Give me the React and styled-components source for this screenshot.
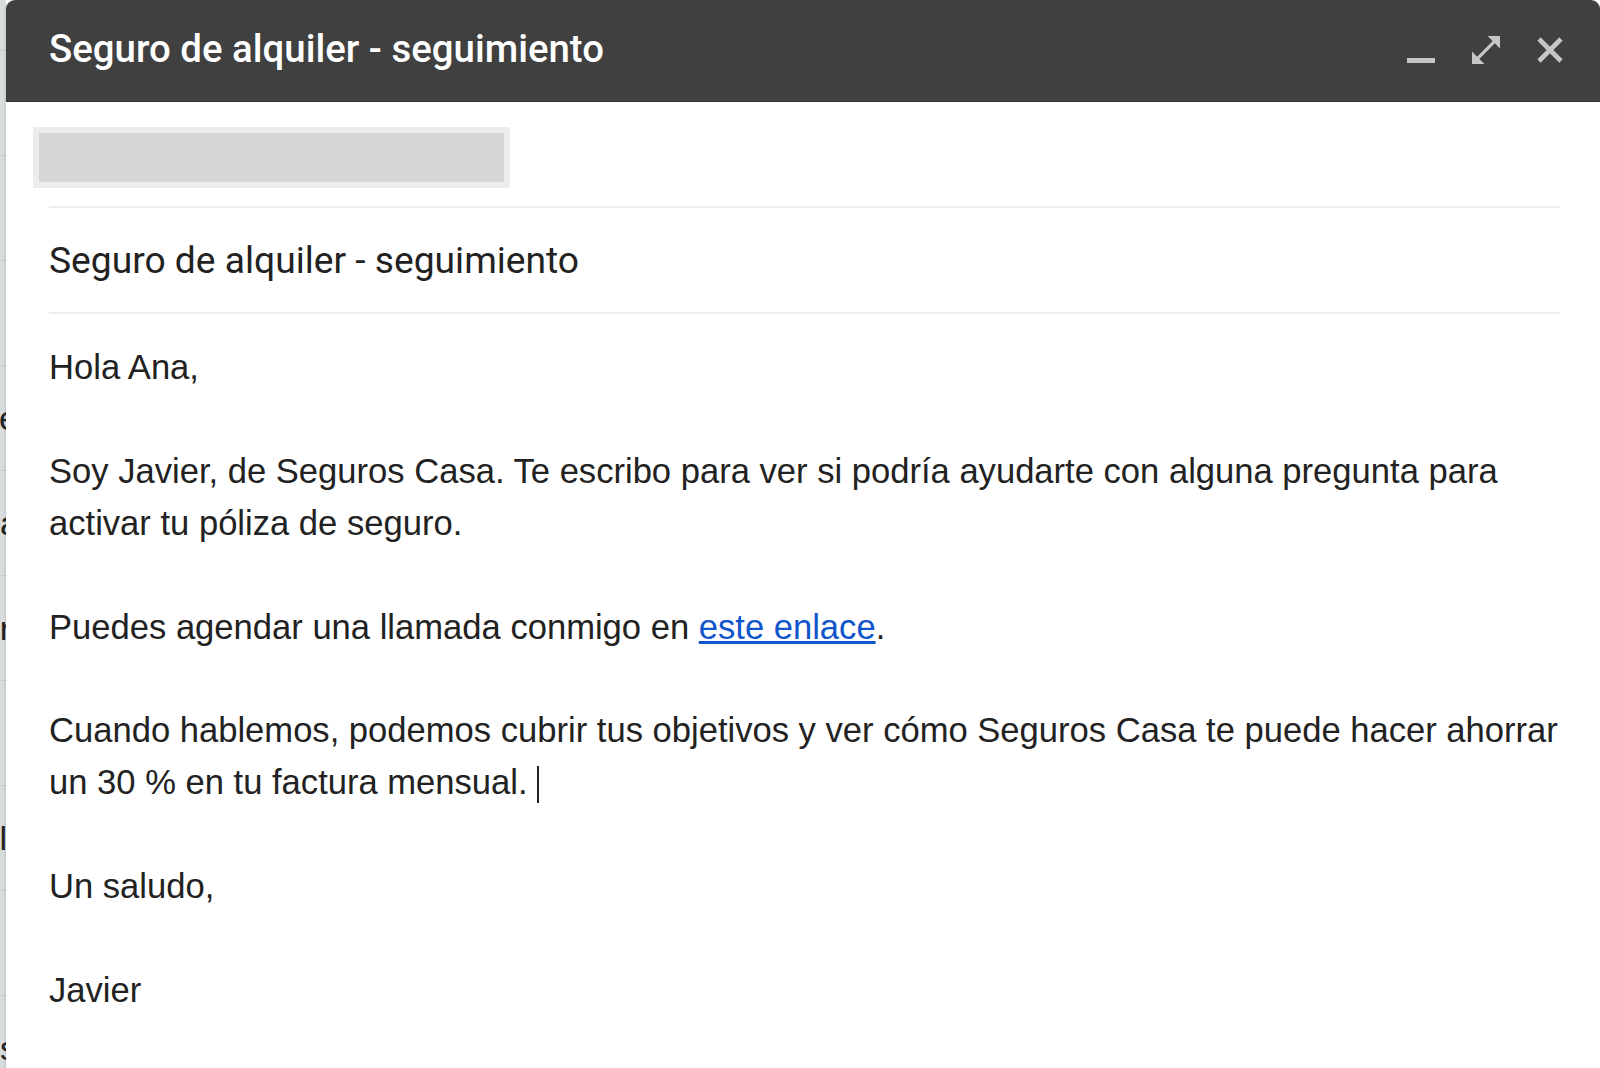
import React from 'react';
import styled, { createGlobalStyle } from 'styled-components';

const GlobalStyle = createGlobalStyle`
    html, body {
        margin: 0;
        padding: 0;
        background: #ffffff;
        overflow: hidden;
    }
`;

const backdropRows = [
    { text: '', shift: 0 },
    { text: '', shift: 0 },
    { text: '', shift: 0 },
    { text: 'Re', shift: -12 },
    { text: 'Pa', shift: -13 },
    { text: 'Fr', shift: -5 },
    { text: '', shift: 0 },
    { text: 'Il', shift: -1 },
    { text: '', shift: 0 },
    { text: 'Es', shift: -11 },
];

function Minimize() {
    return (
        <svg width="28" height="28" viewBox="0 0 28 28">
            <rect x="0" y="22" width="28" height="5" fill="currentColor" />
        </svg>
    );
}

function Expand() {
    return (
        <svg width="28" height="28" viewBox="3 3 18 18">
            <path
                fill="currentColor"
                d="M21 11V3h-8l3.29 3.29-10 10L3 13v8h8l-3.29-3.29 10-10z"
            />
        </svg>
    );
}

function Close() {
    return (
        <svg width="26" height="26" viewBox="0 0 26 26">
            <path d="M2 2L24 24M24 2L2 24" stroke="currentColor" strokeWidth="4.6" />
        </svg>
    );
}

function App() {
    return (
        <Page>
            <GlobalStyle />
            <Backdrop>
                <BackdropTop />
                {backdropRows.map((row, i) => (
                    <BackdropRow key={i}>
                        <BackdropText shift={row.shift}>{row.text}</BackdropText>
                    </BackdropRow>
                ))}
            </Backdrop>
            <Compose>
                <Header>
                    <Title>Seguro de alquiler - seguimiento</Title>
                    <Controls>
                        <IconButton aria-label="Minimizar">
                            <Minimize />
                        </IconButton>
                        <IconButton aria-label="Pantalla completa">
                            <Expand />
                        </IconButton>
                        <IconButton aria-label="Cerrar">
                            <Close />
                        </IconButton>
                    </Controls>
                </Header>
                <Content>
                    <RecipientChip />
                    <SubjectRow>Seguro de alquiler - seguimiento</SubjectRow>
                    <Body>
                        <Para>Hola Ana,</Para>
                        <Para>
                            Soy Javier, de Seguros Casa. Te escribo para ver si podría ayudarte con
                            alguna pregunta para activar tu póliza de seguro.
                        </Para>
                        <Para>
                            Puedes agendar una llamada conmigo en <Link href="#">este enlace</Link>.
                        </Para>
                        <Para>
                            Cuando hablemos, podemos cubrir tus objetivos y ver cómo Seguros Casa te
                            puede hacer ahorrar un 30 % en tu factura mensual. <Caret />
                        </Para>
                        <Para>Un saludo,</Para>
                        <Para>Javier</Para>
                    </Body>
                </Content>
            </Compose>
        </Page>
    );
}

const Page = styled.div`
    display: flex;
    height: 100vh;
    width: 100vw;
`;

const Backdrop = styled.div`
    width: 6px;
    flex-shrink: 0;
    background: #d8dcdc;
    overflow: hidden;
    display: flex;
    flex-direction: column;
`;

const BackdropTop = styled.div`
    height: 50px;
    flex-shrink: 0;
    border-bottom: 1px solid #c9cdcd;
`;

const BackdropRow = styled.div`
    height: 104px;
    flex-shrink: 0;
    display: flex;
    align-items: center;
    justify-content: flex-end;
    border-bottom: 1px solid #c9cdcd;
    overflow: hidden;
`;

const BackdropText = styled.span`
    font-family: "Liberation Sans", Arial, sans-serif;
    font-size: 34px;
    color: #222;
    white-space: nowrap;
    margin-right: ${props => props.shift}px;
`;

const Compose = styled.div`
    flex: 1;
    display: flex;
    flex-direction: column;
    background: #ffffff;
    border-top-left-radius: 9px;
    border-top-right-radius: 9px;
    overflow: hidden;
    box-shadow: -1px 0 2px rgba(0, 0, 0, 0.12);
`;

const Header = styled.div`
    height: 102px;
    flex-shrink: 0;
    box-sizing: border-box;
    background: #404040;
    border-bottom: 1px solid #353535;
    display: flex;
    align-items: center;
    justify-content: space-between;
    padding: 0 37px 4px 43px;
`;

const Title = styled.div`
    font-family: Roboto, "Noto Sans", sans-serif;
    font-weight: 500;
    font-size: 38.4px;
    color: #ffffff;
`;

const Controls = styled.div`
    display: flex;
    align-items: center;
    gap: 37px;
    color: #c6c6c6;
    padding-top: 2px;
`;

const IconButton = styled.div`
    display: flex;
    align-items: center;
    justify-content: center;
`;

const Content = styled.div`
    padding: 0 40px 0 43px;
    display: flex;
    flex-direction: column;
`;

const RecipientChip = styled.div`
    width: 477px;
    height: 61px;
    box-sizing: border-box;
    margin: 25px 0 0 -16px;
    background: #d6d6d6;
    border: 6px solid #ececec;
`;

const SubjectRow = styled.div`
    margin-top: 18px;
    height: 108px;
    box-sizing: border-box;
    border-top: 2px solid #efefef;
    border-bottom: 2px solid #efefef;
    display: flex;
    align-items: center;
    font-family: Roboto, "Noto Sans", sans-serif;
    font-size: 37.2px;
    color: #222222;
`;

const Body = styled.div`
    margin-right: -32px;
    padding-top: 28px;
    font-family: "Liberation Sans", Arial, sans-serif;
    font-size: 34.6px;
    line-height: 51.9px;
    color: #222222;
`;

const Para = styled.p`
    margin: 0 0 51.9px;
`;

const Link = styled.a`
    color: #1155cc;
    text-decoration: underline;
`;

const Caret = styled.span`
    display: inline-block;
    width: 2px;
    height: 37px;
    background: #222222;
    vertical-align: -9px;
`;

export default App;
